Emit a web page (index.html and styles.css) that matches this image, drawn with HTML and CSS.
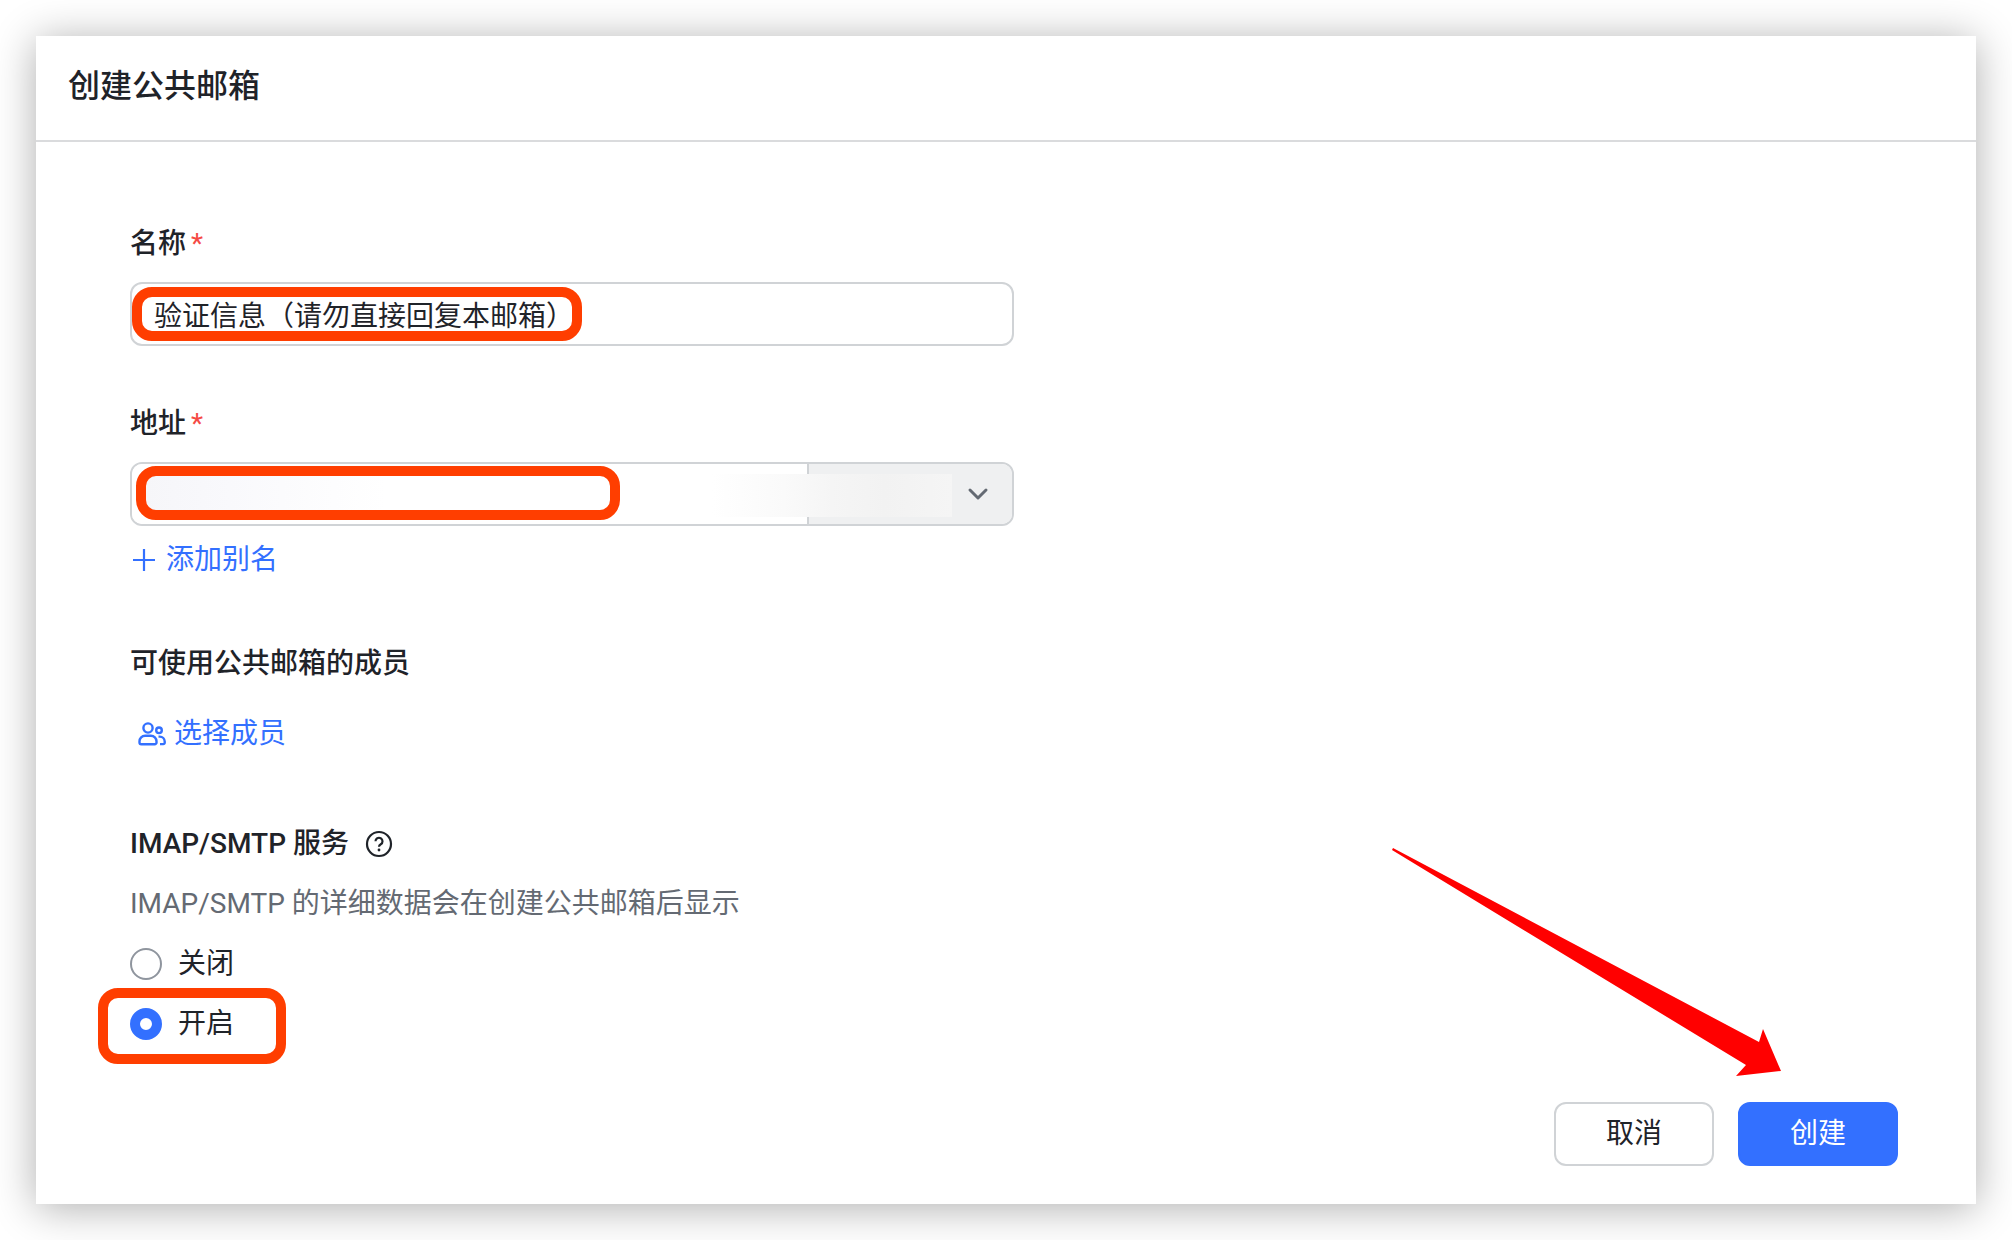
FILE: index.html
```
<!DOCTYPE html>
<html lang="zh-CN">
<head>
  <meta charset="UTF-8">
  <meta name="viewport" content="width=device-width, initial-scale=1">
  <title>创建公共邮箱</title>
  <link rel="stylesheet" href="styles.css">
</head>
<body>
<main class="card">
  <header class="card-header">
    <h1>创建公共邮箱</h1>
  </header>

  <form class="card-body">
    <div class="field">
      <label class="field-label" for="name">名称<span class="required">*</span></label>
      <div class="control">
        <input class="text-input" type="text" id="name" value="验证信息（请勿直接回复本邮箱）" required>
        <span class="mark mark-name"></span>
      </div>
    </div>

    <div class="field">
      <label class="field-label" for="address">地址<span class="required">*</span></label>
      <div class="control address">
        <input class="address-input" type="text" id="address" required>
        <select class="address-domain" aria-label="域名">
          <option></option>
        </select>
        <svg class="chevron" viewBox="0 0 24 24" aria-hidden="true"><path d="M4 8l8 8 8-8"/></svg>
        <span class="mask mask-user"></span>
        <span class="mask mask-domain"></span>
        <span class="mark mark-address"></span>
      </div>
      <button type="button" class="link-button add-alias">
        <svg class="icon-plus" viewBox="0 0 24 24" aria-hidden="true"><path d="M12 1v22M1 12h22"/></svg>
        添加别名
      </button>
    </div>

    <section class="members">
      <h2>可使用公共邮箱的成员</h2>
      <button type="button" class="link-button select-members">
        <svg class="icon-members" viewBox="0 0 28 24" aria-hidden="true">
          <circle cx="10" cy="6" r="4.6"/>
          <circle cx="21" cy="8.3" r="2.8"/>
          <path d="M1.5 20.5v-1.2a5.6 5.6 0 0 1 5.6-5.6h5.8a5.6 5.6 0 0 1 5.6 5.6v1.2a1.8 1.8 0 0 1-1.8 1.8H3.3a1.8 1.8 0 0 1-1.8-1.8z"/>
          <path d="M20.5 14.6h1.2a5 5 0 0 1 5 5v1.1a1.4 1.4 0 0 1-1.4 1.4H22"/>
        </svg>
        选择成员
      </button>
    </section>

    <fieldset class="service">
      <legend>
        IMAP/SMTP 服务
        <svg class="icon-help" viewBox="0 0 28 28" aria-hidden="true">
          <circle cx="14" cy="14" r="12"/>
          <path d="M10.5 11.3a3.5 3.5 0 1 1 5.3 3c-1.2.7-1.8 1.2-1.8 2.5"/>
          <circle class="dot" cx="14" cy="20" r="1.4"/>
        </svg>
      </legend>
      <p class="hint">IMAP/SMTP 的详细数据会在创建公共邮箱后显示</p>
      <label class="radio"><input type="radio" name="service" value="off">关闭</label>
      <label class="radio"><input type="radio" name="service" value="on" checked>开启<span class="mark mark-radio"></span></label>
    </fieldset>

    <footer class="actions">
      <button type="button" class="btn">取消</button>
      <button type="submit" class="btn btn-primary">创建</button>
      <svg class="arrow" viewBox="0 0 390 230" aria-hidden="true"><path d="M0 2l1-2 366 194 4-13 18 42-45 5 10-11z"/></svg>
    </footer>
  </form>
</main>
</body>
</html>
```
FILE: styles.css
```
* {
  box-sizing: border-box;
}

body {
  margin: 0;
  padding: 36px;
  background: #fff;
  color: #1f2329;
  font-family: Roboto, "Noto Sans CJK SC", sans-serif;
  font-size: 28px;
  line-height: 40px;
}

button, input, select {
  font: inherit;
  color: inherit;
}

.card {
  background: #fff;
  box-shadow: 0 4px 40px rgba(0, 0, 0, 0.32);
}

.card-header {
  padding: 30px 32px 34px;
  border-bottom: 2px solid #dadbdd;
}

h1 {
  margin: 0;
  font-size: 32px;
  font-weight: 500;
  line-height: 40px;
}

.card-body {
  padding: 82px 78px 38px 94px;
}

/* fields */
.field {
  margin-bottom: 58px;
}

.field-label {
  display: flex;
  gap: 5px;
  height: 40px;
  margin-bottom: 18px;
  font-weight: 500;
}

.required {
  color: #f54a45;
  font-weight: 400;
}

.control {
  position: relative;
  width: 884px;
  max-width: 100%;
}

.text-input {
  display: block;
  width: 100%;
  height: 64px;
  padding: 0 22px;
  border: 2px solid #d0d3d6;
  border-radius: 12px;
  background: #fff;
}

.address {
  display: flex;
  height: 64px;
  border: 2px solid #d0d3d6;
  border-radius: 12px;
  overflow: hidden;
}

.address-input {
  flex: 1;
  min-width: 0;
  padding: 0 22px;
  border: 0;
  background: #fff;
}

.address-domain {
  width: 205px;
  padding: 0 22px;
  border: 0;
  border-left: 2px solid #d0d3d6;
  border-radius: 0;
  background: #eff0f1;
  appearance: none;
}

.chevron {
  position: absolute;
  top: 18px;
  right: 22px;
  width: 24px;
  height: 24px;
  fill: none;
  stroke: #646a73;
  stroke-width: 3;
  stroke-linecap: round;
  stroke-linejoin: round;
  pointer-events: none;
}

/* blurred-out address */
.mask {
  position: absolute;
  top: 10px;
  height: 43px;
  pointer-events: none;
}

.mask-user {
  left: 14px;
  width: 240px;
  background: linear-gradient(90deg, #f6f6f9, #f9f9fc 35%, #fff);
}

.mask-domain {
  right: 60px;
  width: 240px;
  background: linear-gradient(90deg, #fff, #fafafa 30%, #f5f5f5 50%, #f2f2f2 72%, #f5f5f5);
}

/* link-like buttons */
.link-button {
  display: flex;
  align-items: center;
  padding: 0;
  border: 0;
  background: none;
  color: #3370ff;
  cursor: pointer;
}

.link-button svg {
  fill: none;
  stroke: currentColor;
}

.add-alias {
  gap: 10px;
  margin-top: 14px;
}

.icon-plus {
  width: 24px;
  height: 24px;
  margin-left: 2px;
  stroke-width: 2.2;
}

h2 {
  margin: 64px 0 30px;
  font-size: 28px;
  font-weight: 500;
  line-height: 40px;
}

.select-members {
  gap: 8px;
  margin-left: 8px;
}

.icon-members {
  width: 28px;
  height: 24px;
  stroke-width: 2.4;
}

/* IMAP/SMTP */
.service {
  margin: 70px 0 0;
  padding: 0;
  border: 0;
}

legend {
  display: flex;
  align-items: center;
  gap: 16px;
  padding: 0;
  font-weight: 500;
}

.icon-help {
  width: 28px;
  height: 28px;
  fill: none;
  stroke: currentColor;
  stroke-width: 2.2;
}

.icon-help .dot {
  fill: currentColor;
  stroke: none;
}

.hint {
  margin: 20px 0 0;
  color: #646a73;
}

.radio {
  position: relative;
  display: flex;
  align-items: center;
  gap: 16px;
  width: max-content;
  margin-top: 20px;
}

.radio input {
  width: 32px;
  height: 32px;
  margin: 0;
  border: 2px solid #8f959e;
  border-radius: 50%;
  background: #fff;
  appearance: none;
}

.radio input:checked {
  border: 10px solid #3370ff;
}

/* footer */
.actions {
  position: relative;
  display: flex;
  justify-content: flex-end;
  gap: 24px;
  margin-top: 58px;
}

.btn {
  width: 160px;
  height: 64px;
  padding: 0;
  border: 2px solid #d0d3d6;
  border-radius: 12px;
  background: #fff;
  cursor: pointer;
}

.btn-primary {
  border-color: #3370ff;
  background: #3370ff;
  color: #fff;
}

/* highlights drawn over the form */
.mark {
  position: absolute;
  border: 10px solid #ff3e00;
  border-radius: 20px;
  pointer-events: none;
}

.mark-name {
  top: 5px;
  left: 2px;
  width: 450px;
  height: 54px;
}

.mark-address {
  top: 2px;
  left: 4px;
  width: 484px;
  height: 54px;
}

.mark-radio {
  top: -16px;
  left: -32px;
  width: 188px;
  height: 76px;
}

.arrow {
  position: absolute;
  right: 116px;
  bottom: 88px;
  width: 390px;
  height: 230px;
  fill: #f00;
  pointer-events: none;
}
```
